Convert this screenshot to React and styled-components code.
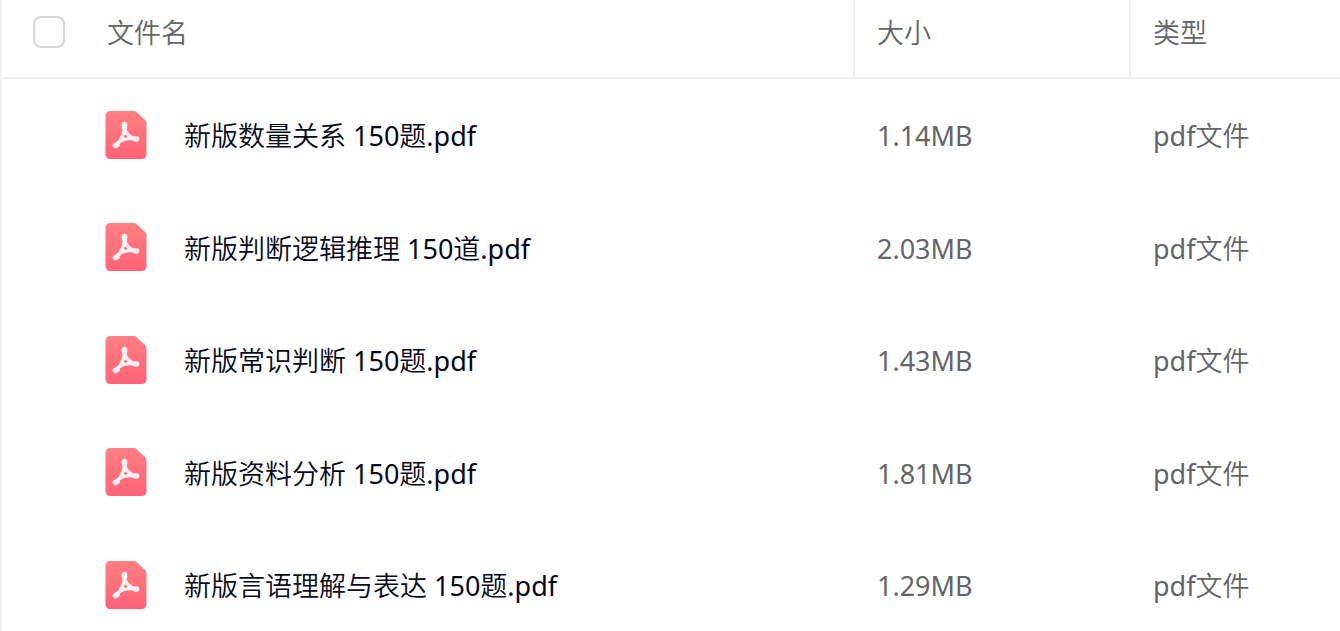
import { useState } from "react";
import styled, { createGlobalStyle } from "styled-components";

const files = [
    { name: "新版数量关系 150题.pdf", size: "1.14MB", type: "pdf文件" },
    { name: "新版判断逻辑推理 150道.pdf", size: "2.03MB", type: "pdf文件" },
    { name: "新版常识判断 150题.pdf", size: "1.43MB", type: "pdf文件" },
    { name: "新版资料分析 150题.pdf", size: "1.81MB", type: "pdf文件" },
    { name: "新版言语理解与表达 150题.pdf", size: "1.29MB", type: "pdf文件" },
];

const PdfIcon = () => (
    <Icon viewBox="0 0 42 49" aria-hidden="true">
        <defs>
            <linearGradient id="pdfFill" x1="0" y1="0" x2="0" y2="1">
                <stop offset="0" stopColor="#ff7f82" />
                <stop offset="1" stopColor="#ff6377" />
            </linearGradient>
        </defs>
        <path d="M5.5 0H29Q30.500 0 31.500 1L40.500 9.500Q41.500 10.500 41.500 12V43Q41.500 48 36.500 48H5.500Q0.500 48 0.500 43V5Q0.500 0 5.500 0Z" fill="url(#pdfFill)" />
        <g fill="none" stroke="#fff0f1" strokeLinecap="round" strokeLinejoin="round">
            <path d="M19.500 14.500C19.500 21 23 26 31 28" strokeWidth="3.600" />
            <path d="M19.500 14.500C20 22 17 29 11 34.500" strokeWidth="3.600" />
            <path d="M15 30C19 27.500 25 27 31 28" strokeWidth="3.600" />
            <path d="M19.500 13.500V15.500M10.500 34.500L12 33.500M30.500 28H31.500" strokeWidth="5.600" />
        </g>
        <circle cx="20.500" cy="25.500" r="1.300" fill="#ff7480" />
    </Icon>
);

const App = () => {
    const [checked, setChecked] = useState(false);

    return (
        <>
            <GlobalStyle />
            <FileTable>
                <thead>
                    <HeadRow>
                        <CheckHead>
                            <CheckBox
                                type="checkbox"
                                aria-label="全选"
                                checked={checked}
                                onChange={(e) => setChecked(e.target.checked)}
                            />
                        </CheckHead>
                        <NameHead>文件名</NameHead>
                        <DetailHead $width="276px">大小</DetailHead>
                        <DetailHead $width="211px">类型</DetailHead>
                    </HeadRow>
                </thead>
                <tbody>
                    {files.map((file) => (
                        <FileRow key={file.name}>
                            <td />
                            <NameCell>
                                <FileName>
                                    <PdfIcon />
                                    <FileLabel>{file.name}</FileLabel>
                                </FileName>
                            </NameCell>
                            <DetailCell>{file.size}</DetailCell>
                            <DetailCell>{file.type}</DetailCell>
                        </FileRow>
                    ))}
                </tbody>
            </FileTable>
        </>
    );
};

const GlobalStyle = createGlobalStyle`
    body {
        margin: 0;
        background-color: #ffffff;
        font-family: "Noto Sans", "Noto Sans CJK SC DemiLight", "Noto Sans CJK SC", sans-serif;
        font-size: 27px;
        line-height: 40px;
    }
`;

const FileTable = styled.table`
    width: 100%;
    table-layout: fixed;
    border-collapse: separate;
    border-spacing: 0;
    border-left: 2px solid #f1f1f2;
    color: #636568;
`;

const HeadRow = styled.tr`
    height: 79px;
`;

const HeadCell = styled.th`
    box-sizing: border-box;
    padding: 0 0 12px;
    border-bottom: 2px solid #f1f1f2;
    font-weight: 400;
    text-align: left;
`;

const CheckHead = styled(HeadCell)`
    width: 103px;
    padding: 0 0 14px 31px;
`;

const NameHead = styled(HeadCell)`
    padding-left: 2px;
`;

const DetailHead = styled(HeadCell)`
    width: ${(props) => props.$width};
    padding-left: 22px;
    border-left: 2px solid #f1f1f2;
`;

const CheckBox = styled.input`
    appearance: none;
    display: block;
    box-sizing: border-box;
    width: 32px;
    height: 32px;
    margin: 0;
    border: 2px solid #d7d7d9;
    border-radius: 8px;
    background-color: #ffffff;

    &:checked {
        background-color: #ff6377;
    }
`;

const FileRow = styled.tr`
    height: 112px;

    &:nth-child(even) {
        height: 113px;
    }
`;

const NameCell = styled.td`
    padding: 0;
    color: #05081a;
`;

const FileName = styled.div`
    display: flex;
    align-items: center;
    gap: 37px;
`;

const FileLabel = styled.span`
    padding-top: 2px;
`;

const Icon = styled.svg`
    flex: none;
    width: 42px;
    height: 49px;
`;

const DetailCell = styled.td`
    padding: 2px 0 0 24px;
`;

export default App;
